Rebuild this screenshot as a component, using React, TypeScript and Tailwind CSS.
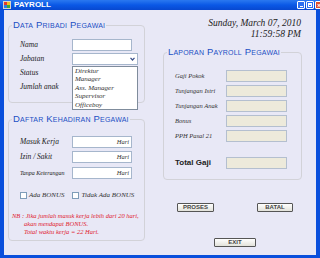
import React from "react";

const serif = "font-['Liberation_Serif',serif] italic";
const sans = "font-['Liberation_Sans',Arial,sans-serif]";

function GroupBox({
  title,
  className,
  children,
}: {
  title: string;
  className: string;
  children: React.ReactNode;
}) {
  return (
    <div className={`relative rounded-[4px] border border-[#d2d2d8] ${className}`}>
      <span
        className={`absolute -top-[7px] left-[3px] bg-[#e8e8f6] px-[1px] text-[9.5px] leading-[12px] text-[#1c4fc4] [font-variant:small-caps] tracking-[0.2px] ${sans}`}
      >
        {title}
      </span>
      {children}
    </div>
  );
}

function TitleIcon() {
  return (
    <svg width="8" height="8" viewBox="0 0 8 8">
      <rect x="0" y="0" width="8" height="8" fill="#d8d4c8" />
      <rect x="1" y="1" width="3" height="3" fill="#e23b2b" />
      <rect x="4" y="1" width="3" height="3" fill="#f0c020" />
      <rect x="1" y="4" width="3" height="3" fill="#2b7de0" />
      <rect x="4" y="4" width="3" height="3" fill="#3aa83a" />
    </svg>
  );
}

export default function App() {
  const jabatan = ["Direktur", "Manager", "Ass. Manager", "Supervisor", "Officeboy"];
  const laporan = ["Gaji Pokok", "Tunjangan Istri", "Tunjangan Anak", "Bonus", "PPH Pasal 21"];

  return (
    <div className="w-[320px] h-[258px] overflow-hidden bg-[#0a4fdc] flex flex-col">
      {/* Title bar */}
      <div className="h-[10px] flex items-center bg-gradient-to-b from-[#2a78f0] via-[#0a58e6] to-[#0848d0] pl-[3px]">
        <TitleIcon />
        <span className={`ml-[3px] text-[8px] leading-[10px] font-bold text-white ${sans}`}>PAYROLL</span>
        <div className="ml-auto flex gap-[1px] -mr-[3px]">
          <div className="w-[8px] h-[8px] rounded-[1px] border border-white bg-[#2d6ff0] flex items-end justify-center pb-[1px]">
            <div className="w-[3px] h-[1px] bg-white" />
          </div>
          <div className="w-[8px] h-[8px] rounded-[1px] border border-white bg-[#2d6ff0] flex items-center justify-center">
            <div className="w-[4px] h-[4px] border border-white border-t-2" />
          </div>
          <div className="w-[8px] h-[8px] rounded-[1px] border border-white bg-[#e0502a] flex items-center justify-center text-white text-[7px] leading-none font-bold">
            ×
          </div>
        </div>
      </div>

      {/* Body */}
      <div className="flex-1 mx-[4px] mb-[3px] bg-[#e8e8f6] flex pl-[4px]">
        {/* Left column */}
        <div className="w-[137px] flex flex-col pt-[15px]">
          <GroupBox title="Data Pribadi Pegawai" className="h-[78px] pt-[13px] pl-[11px]">
            <div className="flex flex-col gap-[2px]">
              <div className="flex items-center h-[12px]">
                <span className={`w-[52px] text-[7.5px] text-[#222] ${serif}`}>Nama</span>
                <div className="w-[60px] h-[12px] bg-white border border-[#a6b6cc]" />
              </div>
              <div className="flex items-center h-[12px]">
                <span className={`w-[52px] text-[7.5px] text-[#222] ${serif}`}>Jabatan</span>
                <div className="relative w-[66px] h-[12px] bg-white border border-[#a6b6cc] flex items-center justify-end pr-[2px]">
                  <svg width="5" height="4" viewBox="0 0 5 4">
                    <path d="M0.5 0.8 L2.5 3 L4.5 0.8" stroke="#3a4f8a" strokeWidth="1.2" fill="none" />
                  </svg>
                  {/* open list */}
                  <div className="absolute left-[-1px] top-[12px] w-[66px] h-[44px] bg-white border border-[#7f8c9c] z-10 pl-[2px] flex flex-col">
                    {jabatan.map((j) => (
                      <span key={j} className={`h-[8.4px] text-[7px] leading-[8.4px] text-[#333] ${serif}`}>
                        {j}
                      </span>
                    ))}
                  </div>
                </div>
              </div>
              <div className="flex items-center h-[12px]">
                <span className={`w-[52px] text-[7.5px] text-[#222] ${serif}`}>Status</span>
              </div>
              <div className="flex items-center h-[12px]">
                <span className={`w-[52px] text-[7.5px] text-[#222] ${serif}`}>Jumlah anak</span>
              </div>
            </div>
          </GroupBox>

          <GroupBox title="Daftar Kehadiran Pegawai" className="mt-[16px] h-[122px] pt-[16px] pl-[11px]">
            <div className="flex flex-col">
              {[
                ["Masuk Kerja", "text-[7.5px]", "mt-0"],
                ["Izin / Sakit", "text-[7.5px]", "mt-[3px]"],
                ["Tanpa Keterangan", "text-[6px]", "mt-[4px]"],
              ].map(([label, size, mt]) => (
                <div key={label} className={`flex items-center h-[12px] ${mt}`}>
                  <span className={`w-[52px] whitespace-nowrap text-[#222] ${size} ${serif}`}>{label}</span>
                  <div className={`w-[60px] h-[12px] bg-white border border-[#a6b6cc] flex items-center justify-end pr-[2px] text-[6.5px] text-[#333] ${serif}`}>
                    Hari
                  </div>
                </div>
              ))}
            </div>
            <div className="flex items-center mt-[11px]">
              <div className="w-[7px] h-[7px] bg-white border border-[#7f9db9]" />
              <span className={`ml-[2px] text-[7px] text-[#333] ${serif}`}>Ada BONUS</span>
              <div className="ml-[7px] w-[7px] h-[7px] bg-white border border-[#7f9db9]" />
              <span className={`ml-[3px] text-[7px] text-[#333] ${serif}`}>Tidak Ada BONUS</span>
            </div>
            <div className={`mt-[11px] -ml-[8px] whitespace-nowrap text-[6.5px] leading-[8px] text-[#e0202e] ${serif}`}>
              <div>NB : Jika jumlah masuk kerja lebih dari 20 hari,</div>
              <div className="pl-[12px]">akan mendapat BONUS.</div>
              <div className="pl-[12px]">Total waktu kerja = 22 Hari.</div>
            </div>
          </GroupBox>
        </div>

        {/* Right column */}
        <div className="ml-[18px] w-[139px] flex flex-col">
          <div className={`mt-[8px] pr-[1px] text-right text-[9.5px] leading-[11px] text-[#222] ${serif}`}>
            Sunday, March 07, 2010
          </div>
          <div className={`pr-[1px] text-right text-[9.5px] leading-[10px] text-[#222] ${serif}`}>11:59:58 PM</div>

          <GroupBox title="Laporan Payroll Pegawai" className="mt-[13px] h-[128px] pt-[17px] pl-[11px]">
            <div className="flex flex-col gap-[3px]">
              {laporan.map((l) => (
                <div key={l} className="flex items-center h-[12px]">
                  <span className={`w-[51px] whitespace-nowrap text-[6.5px] text-[#333] ${serif}`}>{l}</span>
                  <div className="w-[61px] h-[12px] bg-[#edeadb] border border-[#b4bfcf]" />
                </div>
              ))}
            </div>
            <div className="flex items-center h-[12px] mt-[15px]">
              <span className={`w-[51px] text-[8px] font-bold text-[#222] ${sans}`}>Total Gaji</span>
              <div className="w-[61px] h-[12px] bg-[#edeadb] border border-[#b4bfcf]" />
            </div>
          </GroupBox>

          <div className="mt-[23px] flex justify-between pl-[14px] pr-[9px]">
            <button className={`w-[37px] h-[9px] rounded-[1px] border border-[#555] bg-gradient-to-b from-white to-[#e2e2da] text-[6px] leading-[7px] font-bold text-[#444] ${sans}`}>
              PROSES
            </button>
            <button className={`w-[36px] h-[9px] rounded-[1px] border border-[#555] bg-gradient-to-b from-white to-[#e2e2da] text-[6px] leading-[7px] font-bold text-[#444] ${sans}`}>
              BATAL
            </button>
          </div>
          <div className="mt-[14px] pl-[51px]">
            <button className={`w-[42px] h-[9px] rounded-[1px] border border-[#555] bg-gradient-to-b from-white to-[#e2e2da] text-[6px] leading-[7px] font-bold text-[#444] ${sans}`}>
              EXIT
            </button>
          </div>
        </div>
      </div>
    </div>
  );
}
